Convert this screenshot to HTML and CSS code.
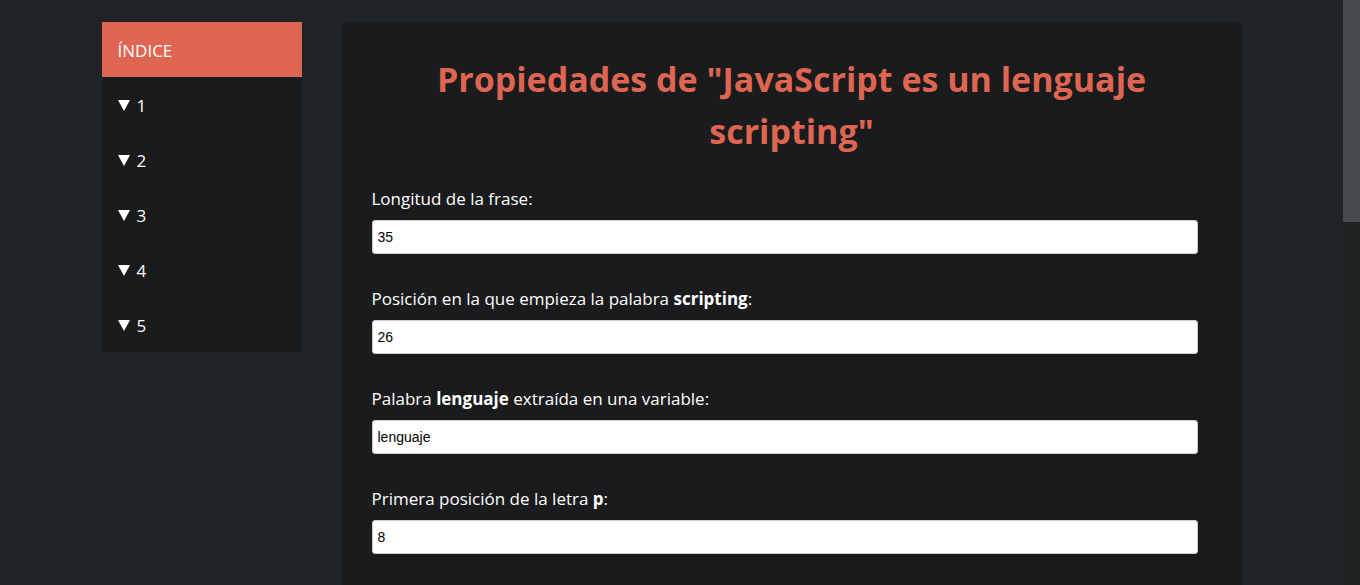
FILE: index.html
```html
<!DOCTYPE html>
<html lang="es">
<head>
  <meta charset="utf-8">
  <meta name="viewport" content="width=device-width, initial-scale=1">
  <title>Propiedades de una frase</title>
  <link rel="stylesheet" href="styles.css">
</head>
<body>
  <div class="page">
    <nav class="menu" aria-label="Índice">
      <a class="menu-item menu-title" href="#">ÍNDICE</a>
      <a class="menu-item" href="#ej1"><svg class="arrow" viewBox="0 0 12 11" aria-hidden="true"><path d="M0 0H12L6 11Z"/></svg>1</a>
      <a class="menu-item" href="#ej2"><svg class="arrow" viewBox="0 0 12 11" aria-hidden="true"><path d="M0 0H12L6 11Z"/></svg>2</a>
      <a class="menu-item" href="#ej3"><svg class="arrow" viewBox="0 0 12 11" aria-hidden="true"><path d="M0 0H12L6 11Z"/></svg>3</a>
      <a class="menu-item" href="#ej4"><svg class="arrow" viewBox="0 0 12 11" aria-hidden="true"><path d="M0 0H12L6 11Z"/></svg>4</a>
      <a class="menu-item" href="#ej5"><svg class="arrow" viewBox="0 0 12 11" aria-hidden="true"><path d="M0 0H12L6 11Z"/></svg>5</a>
    </nav>
    <main class="content">
      <h1 class="title">Propiedades de "JavaScript es un lenguaje scripting"</h1>
      <form class="fields">
        <div class="field">
          <label class="label" for="longitud">Longitud de la frase:</label>
          <input class="input" id="longitud" type="text" value="35">
        </div>
        <div class="field">
          <label class="label" for="posicion">Posición en la que empieza la palabra <strong>scripting</strong>:</label>
          <input class="input" id="posicion" type="text" value="26">
        </div>
        <div class="field">
          <label class="label" for="palabra">Palabra <strong>lenguaje</strong> extraída en una variable:</label>
          <input class="input" id="palabra" type="text" value="lenguaje">
        </div>
        <div class="field">
          <label class="label" for="primera">Primera posición de la letra <strong>p</strong>:</label>
          <input class="input" id="primera" type="text" value="8">
        </div>
      </form>
    </main>
  </div>
  <div class="scroll-track" aria-hidden="true"><div class="scroll-thumb"></div></div>
</body>
</html>
```

FILE: styles.css
```css
* {
  box-sizing: border-box;
}

body {
  margin: 0;
  padding-right: 17px;
  background: #202426;
  color: #fff;
  font-family: "Segoe UI", "Open Sans", "Noto Sans", sans-serif;
  font-size: 17px;
  line-height: 25px;
}

.page {
  display: flex;
  align-items: flex-start;
  gap: 40px;
  max-width: 1140px;
  min-height: 100vh;
  margin: 0 auto;
  padding-top: 22px;
}

.menu {
  display: flex;
  flex: 0 0 200px;
  flex-direction: column;
  background: #1a1b1c;
}

.menu-item {
  display: flex;
  align-items: center;
  gap: 7px;
  padding: 16px 16px 14px;
  color: #fff;
  text-decoration: none;
}

.menu-title {
  background: #de6551;
}

.arrow {
  width: 12px;
  height: 11px;
  fill: #fff;
}

.content {
  flex: 1;
  align-self: stretch;
  min-width: 0;
  padding: 31px 30px 0;
  background: #1a1b1c;
}

.title {
  margin: 0 0 29px;
  color: #de6551;
  font-size: 34px;
  font-weight: 700;
  line-height: 52px;
  text-align: center;
}

.fields {
  display: flex;
  flex-direction: column;
  gap: 32px;
  padding-right: 14px;
}

.field {
  display: flex;
  flex-direction: column;
  gap: 9px;
}

.input {
  width: 100%;
  height: 34px;
  padding: 0 5px;
  border: 1px solid #ccc;
  border-radius: 3px;
  background: #fff;
  color: #000;
  font-family: Arial, "Liberation Sans", sans-serif;
  font-size: 14px;
}

.scroll-track {
  position: fixed;
  top: 0;
  right: 0;
  bottom: 0;
  width: 17px;
  background: #202324;
}

.scroll-thumb {
  height: 38%;
  background: #454a4d;
}
```
